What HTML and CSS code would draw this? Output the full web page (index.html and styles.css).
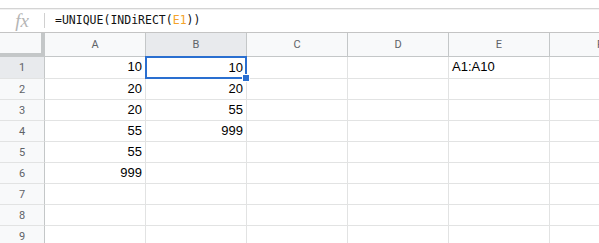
FILE: index.html
```html
<!DOCTYPE html>
<html>
<head>
<meta charset="utf-8">
<link rel="stylesheet" href="styles.css">
</head>
<body>
<div class="app">
  <div class="topstrip"></div>
  <div class="fbar">
    <div class="fx">fx</div>
    <div class="fsep"></div>
    <div class="formula">=UNIQUE(INDiRECT(<span class="ref">E1</span>))</div>
  </div>
  <div class="grid">
    <div class="corner"></div>
    <div class="ch">A</div>
    <div class="ch sel">B</div>
    <div class="ch">C</div>
    <div class="ch">D</div>
    <div class="ch">E</div>
    <div class="ch">F</div>

    <div class="rh sel">1</div>
    <div class="c num">10</div>
    <div class="c num active">10<span class="handle"></span></div>
    <div class="c"></div>
    <div class="c"></div>
    <div class="c txt">A1:A10</div>
    <div class="c"></div>

    <div class="rh">2</div>
    <div class="c num">20</div>
    <div class="c num">20</div>
    <div class="c"></div><div class="c"></div><div class="c"></div><div class="c"></div>

    <div class="rh">3</div>
    <div class="c num">20</div>
    <div class="c num">55</div>
    <div class="c"></div><div class="c"></div><div class="c"></div><div class="c"></div>

    <div class="rh">4</div>
    <div class="c num">55</div>
    <div class="c num">999</div>
    <div class="c"></div><div class="c"></div><div class="c"></div><div class="c"></div>

    <div class="rh">5</div>
    <div class="c num">55</div>
    <div class="c"></div><div class="c"></div><div class="c"></div><div class="c"></div><div class="c"></div>

    <div class="rh">6</div>
    <div class="c num">999</div>
    <div class="c"></div><div class="c"></div><div class="c"></div><div class="c"></div><div class="c"></div>

    <div class="rh">7</div>
    <div class="c"></div><div class="c"></div><div class="c"></div><div class="c"></div><div class="c"></div><div class="c"></div>

    <div class="rh">8</div>
    <div class="c"></div><div class="c"></div><div class="c"></div><div class="c"></div><div class="c"></div><div class="c"></div>

    <div class="rh">9</div>
    <div class="c"></div><div class="c"></div><div class="c"></div><div class="c"></div><div class="c"></div><div class="c"></div>
  </div>
</div>
</body>
</html>
```
FILE: styles.css
```css
html, body {
  margin: 0;
  padding: 0;
  background: #fff;
  overflow: hidden;
}
.app {
  width: 599px;
  height: 243px;
  overflow: hidden;
}
.topstrip {
  height: 8px;
  border-bottom: 1px solid #d4d4d4;
  box-sizing: content-box;
}
.fbar {
  height: 23px;
  display: flex;
  align-items: center;
  border-bottom: 1px solid #c4c4c4;
  box-shadow: inset 0 3px 0 -2px #f1f1f1;
}
.fx {
  width: 44px;
  text-align: center;
  font-family: "Liberation Serif", serif;
  font-style: italic;
  font-size: 19px;
  color: #b5b5b5;
  line-height: 23px;
}
.fsep {
  width: 1px;
  height: 15px;
  background: #d0d0d0;
}
.formula {
  padding-left: 10px;
  font-family: "DejaVu Sans Mono", monospace;
  font-size: 11.5px;
  color: #111;
  line-height: 23px;
}
.ref {
  color: #f4a32a;
}
.grid {
  display: grid;
  grid-template-columns: 45px repeat(6, 101px);
  grid-template-rows: 24px 22px repeat(8, 21px);
}
.grid > div {
  box-sizing: border-box;
}
.corner {
  background: #f8f9fa;
  border-right: 4px solid #c4c7c8;
  border-bottom: 4px solid #c4c7c8;
}
.ch {
  background: #f8f9fa;
  border-right: 1px solid #c4c7c8;
  border-bottom: 1px solid #c4c7c8;
  font-family: Roboto, "Liberation Sans", sans-serif;
  font-size: 11px;
  color: #5f6368;
  display: flex;
  align-items: center;
  justify-content: center;
}
.ch.sel, .rh.sel {
  background: #e8eaed;
}
.rh {
  background: #f8f9fa;
  border-right: 1px solid #c4c7c8;
  border-bottom: 1px solid #e2e3e3;
  font-family: Roboto, "Liberation Sans", sans-serif;
  font-size: 11px;
  color: #5f6368;
  display: flex;
  align-items: center;
  justify-content: center;
}
.c {
  border-right: 1px solid #e2e3e3;
  border-bottom: 1px solid #e2e3e3;
  font-family: "Liberation Sans", Arial, sans-serif;
  font-size: 13px;
  color: #000;
  line-height: 20px;
  padding: 0 3px;
  white-space: nowrap;
  position: relative;
}
.num {
  text-align: right;
}
.txt {
  text-align: left;
}
.active {
  border: 2px solid #2a6fd0;
  margin: -1px 0 0 -1px;
  padding-right: 2px;
  line-height: 19px;
  z-index: 2;
}
.handle {
  position: absolute;
  right: -5px;
  bottom: -5px;
  width: 6px;
  height: 6px;
  background: #2a6fd0;
  border: 1px solid #fff;
}
```
